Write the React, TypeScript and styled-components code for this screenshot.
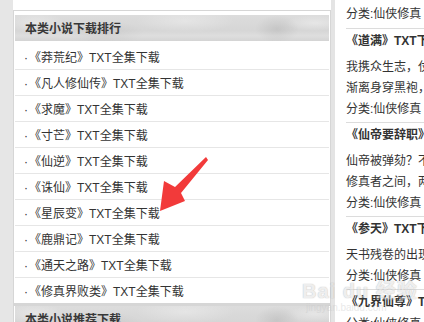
import React from "react";
import styled, { createGlobalStyle } from "styled-components";

const Global = createGlobalStyle`
  html, body { margin: 0; padding: 0; background: #ffffff; overflow: hidden; }
  body { font-family: "Liberation Sans", "Noto Sans CJK SC", sans-serif; font-size: 12px; color: #333; }
`;

const Page = styled.div`
  position: relative;
  display: flex;
  width: 424px;
  height: 322px;
  overflow: hidden;
  background: #fff;
`;

const Gutter = styled.div`
  flex: none;
  width: 13px;
  background: #e6e6e6;
`;

const LeftCol = styled.div`
  flex: none;
  width: 318px;
  display: flex;
  flex-direction: column;
`;

const PrevTail = styled.div`
  flex: none;
  height: 10px;
  background: #fff;
`;

const Panel = styled.section<{ $first?: boolean }>`
  flex: none;
  border: 1px solid #d6d6d6;
  border-top-width: ${(p) => (p.$first ? "1px" : "2px")};
  border-bottom-width: ${(p) => (p.$first ? "1px" : "0")};
  padding: ${(p) => (p.$first ? "4px 1px 0" : "0 1px")};
  background: #fff;
`;

const PanelHead = styled.h3`
  margin: 0;
  height: 23px;
  padding: 3px 0 0 10px;
  line-height: 23px;
  font-size: 12px;
  font-weight: bold;
  color: #383838;
  background-color: #d9d9d9;
  background-image:
    radial-gradient(ellipse 30px 10px at 20px 8px, rgba(255,255,255,0.35), transparent),
    radial-gradient(ellipse 40px 12px at 90px 18px, rgba(0,0,0,0.05), transparent),
    radial-gradient(ellipse 50px 12px at 170px 6px, rgba(255,255,255,0.3), transparent),
    radial-gradient(ellipse 22px 14px at 262px 14px, rgba(0,0,0,0.08), transparent),
    radial-gradient(ellipse 30px 8px at 300px 8px, rgba(255,255,255,0.35), transparent),
    linear-gradient(180deg, #dcdcdc 0%, #d6d6d6 60%, #dedede 80%, #d4d4d4 100%);
`;

const List = styled.ul`
  list-style: none;
  margin: 0;
  padding: 3px 0 0;
`;

const Row = styled.li`
  height: 22px;
  padding: 3px 0 0 9px;
  line-height: 22px;
  border-bottom: 1px solid #e6e6e6;
  white-space: nowrap;
  color: #333;
  &:last-child { border-bottom: none; }
`;

const Dot = styled.span`
  display: inline-block;
  width: 4px;
  margin-right: 1px;
  font-family: "Liberation Sans", sans-serif;
`;

const Band = styled.div`
  flex: none;
  width: 4px;
  background: #e4e4e4;
`;

const RightCol = styled.div`
  flex: none;
  width: 260px;
  padding: 4px 0 0 11px;
`;

const Item = styled.div<{ $partial?: boolean }>`
  padding-bottom: ${(p) => (p.$partial ? "3px" : "2px")};
  border-bottom: 1px solid #dcdcdc;
`;

const Title = styled.div`
  height: 24px;
  line-height: 24px;
  font-weight: bold;
  white-space: nowrap;
  color: #333;
`;

const DescBox = styled.div`
  margin-top: 4px;
`;

const Desc = styled.p`
  margin: 0;
  line-height: 21px;
  white-space: nowrap;
  color: #333;
`;

const Meta = styled.div`
  line-height: 21px;
  white-space: nowrap;
  color: #333;
`;

const Arrow = styled.svg`
  position: absolute;
  left: 0;
  top: 0;
  pointer-events: none;
`;

const Watermark = styled.div`
  position: absolute;
  left: 302px;
  top: 280px;
  display: flex;
  flex-direction: column;
  pointer-events: none;
  opacity: 0.5;
`;

const WmBrand = styled.div`
  font-family: "Liberation Sans", "Noto Sans CJK SC", sans-serif;
  font-size: 20px;
  font-weight: bold;
  line-height: 22px;
  color: rgba(255, 255, 255, 0.7);
  text-shadow: 0 0 1px #9a9a9a, 0 0 1px #9a9a9a;
  letter-spacing: 1px;
`;

const WmUrl = styled.div`
  font-family: "Liberation Sans", sans-serif;
  font-size: 10px;
  line-height: 12px;
  padding-left: 4px;
  color: rgba(200, 200, 200, 0.8);
`;

const ranking = ["莽荒纪", "凡人修仙传", "求魔", "寸芒", "仙逆", "诛仙", "星辰变", "鹿鼎记", "通天之路", "修真界败类"];

type Book = { title: string; desc: string[] };
const books: Book[] = [
  { title: "《道满》TXT下载", desc: ["我携众生志，仗剑问长生", "渐离身穿黑袍，踏入仙途"] },
  { title: "《仙帝要辞职》", desc: ["仙帝被弹劾？不服来战", "修真者之间，两界纷争"] },
  { title: "《参天》TXT下载", desc: ["天书残卷的出现"] },
  { title: "《九界仙尊》TXT下载", desc: [] },
];

export default function App() {
  return (
    <Page>
      <Global />
      <Gutter />
      <LeftCol>
        <PrevTail />
        <Panel $first>
          <PanelHead>本类小说下载排行</PanelHead>
          <List>
            {ranking.map((name) => (
              <Row key={name}>
                <Dot>·</Dot>《{name}》TXT全集下载
              </Row>
            ))}
          </List>
        </Panel>
        <Panel>
          <PanelHead>本类小说推荐下载</PanelHead>
        </Panel>
      </LeftCol>
      <Band />
      <RightCol>
        <Item $partial>
          <Meta>分类:仙侠修真</Meta>
        </Item>
        {books.map((b) => (
          <Item key={b.title}>
            <Title>{b.title}</Title>
            {b.desc.length > 0 && (
              <DescBox>
                {b.desc.map((d) => (
                  <Desc key={d}>{d}</Desc>
                ))}
              </DescBox>
            )}
            <Meta>分类:仙侠修真</Meta>
          </Item>
        ))}
      </RightCol>
      <Arrow width="424" height="322" viewBox="0 0 424 322">
        <polygon
          points="160,211 185,201 181,193 208,160 206,157 175,187 164,181"
          fill="#f23a3a"
        />
      </Arrow>
      <Watermark>
        <WmBrand>Bai du 经验</WmBrand>
        <WmUrl>jingyan.baidu.com</WmUrl>
      </Watermark>
    </Page>
  );
}
